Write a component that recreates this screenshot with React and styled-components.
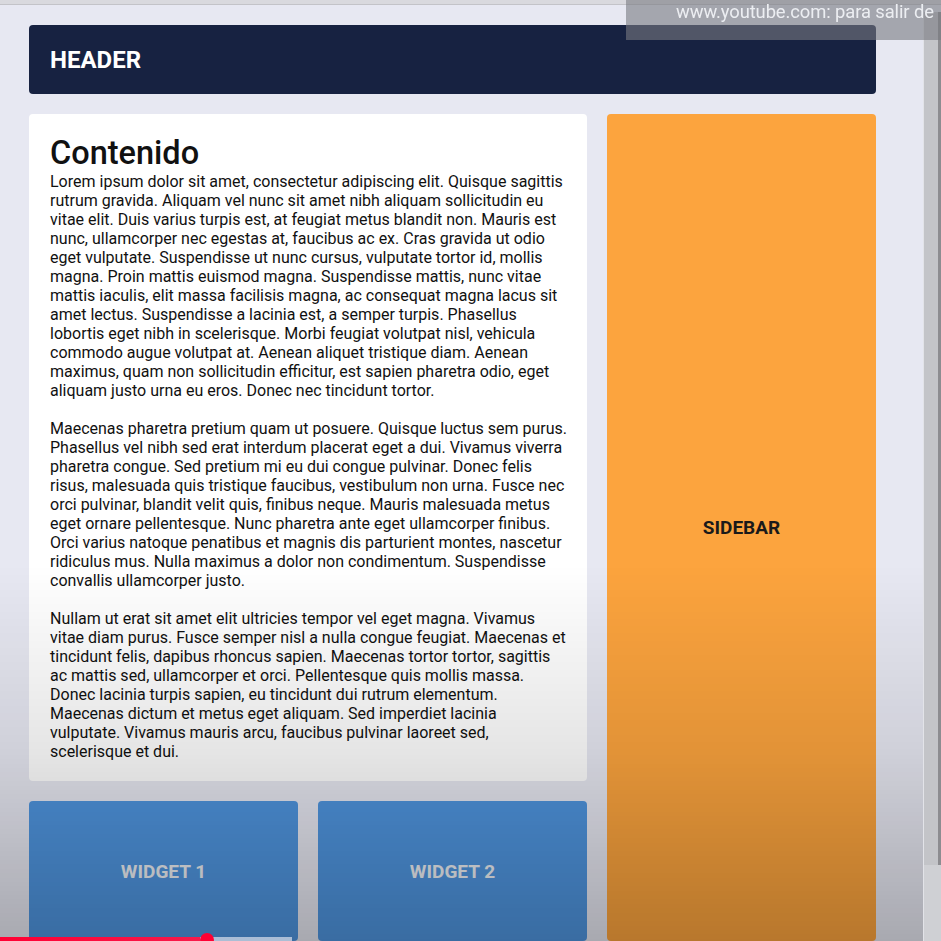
import React from "react";
import styled, { createGlobalStyle } from "styled-components";

const GlobalStyle = createGlobalStyle`
  html, body {
    margin: 0;
    padding: 0;
    height: 100%;
    overflow: hidden;
  }

  body {
    background-color: #e7e8f2;
    font-family: Roboto, "Liberation Sans", sans-serif;
    color: #111;
  }
`;

const Page = styled.div`
  display: grid;
  grid-template-columns: repeat(3, 269px);
  grid-template-rows: 69px auto 140px;
  gap: 20px;
  padding: 25px 0 0 29px;
`;

const Header = styled.header`
  grid-column: 1 / span 3;
  display: flex;
  align-items: center;
  padding: 0 21px;
  border-radius: 4px;
  background-color: #172241;
  color: #fff;
  font-size: 24px;
  font-weight: 700;
`;

const Content = styled.main`
  grid-column: 1 / span 2;
  padding: 20px 20px 20px 21px;
  border-radius: 4px;
  background-color: #fff;

  h1 {
    margin: 0;
    font-size: 32.5px;
    font-weight: 500;
  }

  p {
    margin: 0 0 19px;
    font-size: 16px;
    line-height: 19px;
  }

  p:last-child {
    margin-bottom: 0;
  }
`;

const Sidebar = styled.aside`
  grid-column: 3;
  grid-row: 2 / span 2;
  display: flex;
  align-items: center;
  justify-content: center;
  border-radius: 4px;
  background-color: #fca43e;
  color: #1a1a1a;
  font-size: 19px;
  font-weight: 700;
`;

const Widget = styled.section`
  display: flex;
  align-items: center;
  justify-content: center;
  border-radius: 4px;
  background-color: #4f95df;
  color: #eceff3;
  font-size: 19px;
  font-weight: 700;
`;

// video player chrome drawn over the page
const Shade = styled.div`
  position: fixed;
  inset: 0;
  pointer-events: none;
  background: linear-gradient(
    to bottom,
    rgba(0, 0, 0, 0) 0%,
    rgba(0, 0, 0, 0) 60%,
    rgba(0, 0, 0, 0.1) 80%,
    rgba(0, 0, 0, 0.27) 100%
  );
`;

const TopStrip = styled.div`
  position: fixed;
  top: 0;
  left: 0;
  right: 0;
  height: 4px;
  background-color: #d9d9de;
  border-bottom: 1px solid #c3c3c8;
`;

const Scrollbar = styled.div`
  position: fixed;
  top: 12px;
  right: 0;
  bottom: 0;
  width: 17px;
  background-color: #cfd0d4;
  border-left: 1px solid #e2e3e8;

  &::after {
    content: "";
    position: absolute;
    top: 0;
    left: 0;
    right: 0;
    height: 853px;
    background-color: #c3c4c8;
    border-right: 3px solid #8c8c90;
  }
`;

const Toast = styled.div`
  position: fixed;
  top: 0;
  left: 626px;
  right: 0;
  height: 40px;
  padding: 0 0 0 50px;
  overflow: hidden;
  white-space: nowrap;
  background-color: rgba(120, 121, 128, 0.6);
  color: #eceef2;
  font-size: 18.4px;
  letter-spacing: -0.1px;
  line-height: 24px;
`;

const Progress = styled.div`
  position: fixed;
  left: 0;
  bottom: 0;
  width: 292px;
  height: 4px;
  background: linear-gradient(
    to right,
    #ff0033 0px,
    #f81a4a 200px,
    rgba(220, 225, 235, 0.7) 200px
  );

  &::after {
    content: "";
    position: absolute;
    left: 200px;
    top: -4px;
    width: 14px;
    height: 14px;
    border-radius: 50%;
    background-color: #ff0033;
  }
`;

const App = () => (
  <>
    <GlobalStyle />
    <Page>
      <Header>HEADER</Header>
      <Content>
        <h1>Contenido</h1>
        <p>
          Lorem ipsum dolor sit amet, consectetur adipiscing elit. Quisque
          sagittis rutrum gravida. Aliquam vel nunc sit amet nibh aliquam
          sollicitudin eu vitae elit. Duis varius turpis est, at feugiat metus
          blandit non. Mauris est nunc, ullamcorper nec egestas at, faucibus ac
          ex. Cras gravida ut odio eget vulputate. Suspendisse ut nunc cursus,
          vulputate tortor id, mollis magna. Proin mattis euismod magna.
          Suspendisse mattis, nunc vitae mattis iaculis, elit massa facilisis
          magna, ac consequat magna lacus sit amet lectus. Suspendisse a lacinia
          est, a semper turpis. Phasellus lobortis eget nibh in scelerisque.
          Morbi feugiat volutpat nisl, vehicula commodo augue volutpat at.
          Aenean aliquet tristique diam. Aenean maximus, quam non sollicitudin
          efficitur, est sapien pharetra odio, eget aliquam justo urna eu eros.
          Donec nec tincidunt tortor.
        </p>
        <p>
          Maecenas pharetra pretium quam ut posuere. Quisque luctus sem purus.
          Phasellus vel nibh sed erat interdum placerat eget a dui. Vivamus
          viverra pharetra congue. Sed pretium mi eu dui congue pulvinar. Donec
          felis risus, malesuada quis tristique faucibus, vestibulum non urna.
          Fusce nec orci pulvinar, blandit velit quis, finibus neque. Mauris
          malesuada metus eget ornare pellentesque. Nunc pharetra ante eget
          ullamcorper finibus. Orci varius natoque penatibus et magnis dis
          parturient montes, nascetur ridiculus mus. Nulla maximus a dolor non
          condimentum. Suspendisse convallis ullamcorper justo.
        </p>
        <p>
          Nullam ut erat sit amet elit ultricies tempor vel eget magna. Vivamus
          vitae diam purus. Fusce semper nisl a nulla congue feugiat. Maecenas
          et tincidunt felis, dapibus rhoncus sapien. Maecenas tortor tortor,
          sagittis ac mattis sed, ullamcorper et orci. Pellentesque quis mollis
          massa. Donec lacinia turpis sapien, eu tincidunt dui rutrum
          elementum. Maecenas dictum et metus eget aliquam. Sed imperdiet
          lacinia vulputate. Vivamus mauris arcu, faucibus pulvinar laoreet
          sed, scelerisque et dui.
        </p>
      </Content>
      <Sidebar>SIDEBAR</Sidebar>
      <Widget>WIDGET 1</Widget>
      <Widget>WIDGET 2</Widget>
    </Page>
    <Shade />
    <TopStrip />
    <Scrollbar />
    <Toast>www.youtube.com: para salir de</Toast>
    <Progress />
  </>
);

export default App;
